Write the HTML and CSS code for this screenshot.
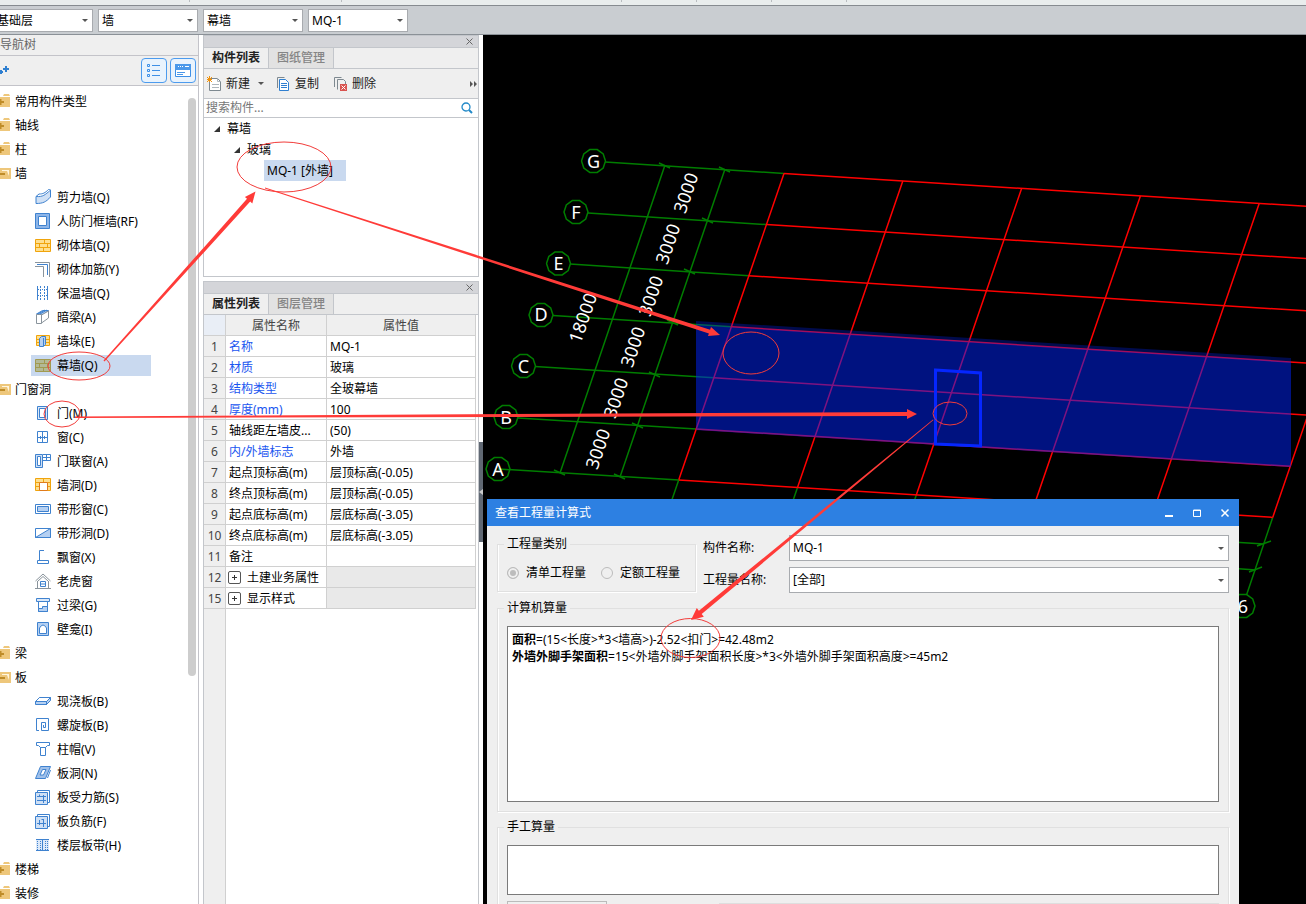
FILE: index.html
```html
<!DOCTYPE html>
<html lang="zh-CN">
<head>
  <meta charset="UTF-8">
  <meta name="viewport" content="width=device-width, initial-scale=1.0">
  <title>查看工程量计算式</title>
  <link rel="stylesheet" href="styles.css">
</head>
<body>

<!-- icon set -->
<svg class="sprite" aria-hidden="true">
  <symbol id="folder" viewBox="0 0 16 16">
    <path d="M0 4h15v10H0zM8 3l1-2h5l1 2z" fill="#eec77b"/>
    <path d="M2 9h7M5.500 6v6" stroke="#bf8c28" stroke-width="2"/>
  </symbol>
  <symbol id="folder-open" viewBox="0 0 16 16">
    <path d="M0 3h16v11H0z" fill="#eec77b"/>
    <path d="M7 5h7v6l-2-5H7z" fill="#fff6e0"/>
    <path d="M3 9h7" stroke="#bf8c28" stroke-width="2"/>
  </symbol>
  <symbol id="shear" viewBox="0 0 16 16">
    <path d="M1 7.500C8 8 10 6 15.500 1v7C11 13 8 14.500 1 14.500z" fill="#cfe0f5" stroke="#3f82cf"/>
    <path d="M1 7.500l3-2.500c4 0 6-1 9.500-4.500l2 .5" fill="#fff" stroke="#3f82cf"/>
  </symbol>
  <symbol id="frame" viewBox="0 0 16 16">
    <path d="M.5.5h14v15H.5z" fill="#8db5e8" stroke="#3f82cf"/>
    <path d="M3.500 3.500h8v9h-8z" fill="#fff" stroke="#3f82cf"/>
  </symbol>
  <symbol id="brick" viewBox="0 0 16 16">
    <path d="M.5 2.500h15v12H.5z" fill="#ffdf8e" stroke="#f0a40c"/>
    <path d="M0 6.500h16M0 10.500h16M9.500 3v3.500M4.500 6.500v4M12.500 6.500v4M8.500 10.500v4" stroke="#f0a40c"/>
  </symbol>
  <symbol id="brick-sel" viewBox="0 0 16 16">
    <path d="M.5 2.500h15v12H.5z" fill="#b3b996" stroke="#a19a50"/>
    <path d="M0 6.500h16M0 10.500h16M9.500 3v3.500M4.500 6.500v4M12.500 6.500v4M8.500 10.500v4" stroke="#a19a50"/>
  </symbol>
  <symbol id="rebar" viewBox="0 0 16 16" fill="none">
    <path d="M0 1.500h14.500V16M0 5.500h8.500V16" stroke="#8a949c"/>
    <path d="M2 3.500h10.500V14" stroke="#3f82cf"/>
  </symbol>
  <symbol id="insul" viewBox="0 0 16 16" stroke="#3f82cf">
    <path d="M2.500 1v14M12.500 1v14"/>
    <path d="M5.500 1v14M9.500 1v14" stroke-dasharray="2 1"/>
    <path d="M3 4.500h10M3 10.500h10" stroke-dasharray="1 1"/>
  </symbol>
  <symbol id="beam" viewBox="0 0 16 16">
    <path d="M1.500 5l6-3.500h6L8 5.500z" fill="#b5d0f2" stroke="#3f82cf"/>
    <path d="M1.500 5.500h5v9h-5zM6.500 14l7-5V2L6.500 6" fill="#fff" stroke="#8a949c"/>
    <path d="M3 5l7-4M5 5l7-4" stroke="#3f82cf"/>
  </symbol>
  <symbol id="pier" viewBox="0 0 16 16">
    <path d="M1.500 2.500h13v10h-13z" fill="#ffdf8e" stroke="#f0a40c"/>
    <path d="M1 6.500h14M1 9.500h14" stroke="#f0a40c"/>
    <path d="M4.500 5.500l2-2h4v8l-2 2h-4z" fill="#b5d0f2" stroke="#3f82cf"/>
    <path d="M8.500 5v8" stroke="#3f82cf"/>
  </symbol>
  <symbol id="door" viewBox="0 0 16 16">
    <path d="M2.500 1.500h10v13h-10z" fill="#dce9f9" stroke="#3f82cf"/>
    <path d="M4.500 3.500h6v9h-6z" fill="#fff" stroke="#3f82cf"/>
  </symbol>
  <symbol id="window" viewBox="0 0 16 16" fill="none" stroke="#3f82cf">
    <path d="M2.500 2.500h10v11h-10zM7.500 2v12M2 8.500h11M5.500 7v3M9.500 7v3"/>
  </symbol>
  <symbol id="doorwin" viewBox="0 0 16 16">
    <path d="M.5 1.500h7v13h-7z" fill="#cfe0f5" stroke="#3f82cf"/>
    <path d="M2.500 3.500h3v9h-3z" fill="#fff" stroke="#3f82cf"/>
    <path d="M8 1.500h7.500v6H8M11.500 1v6M8 4.500h7" fill="none" stroke="#3f82cf"/>
  </symbol>
  <symbol id="hole" viewBox="0 0 16 16">
    <path d="M.5 1.500h15v12H.5z" fill="#ffdf8e" stroke="#f0a40c"/>
    <path d="M0 5.500h16M0 9.500h16M8.500 2v3" stroke="#f0a40c"/>
    <path d="M4.500 5.500h8v8h-8z" fill="#fff" stroke="#e07b1c"/>
  </symbol>
  <symbol id="strip" viewBox="0 0 16 16" stroke="#3f82cf">
    <path d="M.5 3.500h15v9H.5z" fill="#fff"/>
    <path d="M2.500 5.500h11v5h-11z" fill="#b5d0f2"/>
  </symbol>
  <symbol id="striphole" viewBox="0 0 16 16" stroke="#3f82cf">
    <path d="M.5 3.500h15v9H.5z" fill="#fff"/>
    <path d="M.5 12.500l15-9v9z" fill="#b5d0f2"/>
  </symbol>
  <symbol id="bay" viewBox="0 0 16 16" fill="none" stroke="#3f82cf">
    <path d="M9 1.500H4.500v10M2.500 11.500h11v3h-11z"/>
  </symbol>
  <symbol id="house" viewBox="0 0 16 16" fill="none">
    <path d="M.5 8L8 1l7.500 7M2.500 8v7M13.500 8v7M0 15.500h16M3 8l5-4.500L13 8" stroke="#8a949c"/>
    <path d="M5.500 8.500h5v5h-5zM5 11h6" stroke="#3f82cf"/>
  </symbol>
  <symbol id="lintel" viewBox="0 0 16 16" stroke="#3f82cf">
    <path d="M1.500 1.500h13v3h-13z" fill="#dce9f9"/>
    <path d="M3.500 4.500h9v10h-9z" fill="#fff"/>
    <path d="M3.500 11.500h4v-2h5v5h-9z" fill="#b5d0f2"/>
  </symbol>
  <symbol id="niche" viewBox="0 0 16 16" stroke="#3f82cf">
    <path d="M2.500 1.500h11v13h-11z" fill="#b5d0f2"/>
    <path d="M4.500 12.500V7q3.500-6 7 0v5.500z" fill="#fff"/>
  </symbol>
  <symbol id="slab" viewBox="0 0 16 16" stroke="#3f82cf">
    <path d="M.5 8.500l4-4h11v3l-4 4H.5z" fill="#b5d0f2"/>
    <path d="M.5 8.500l4-4h11l-4 4z" fill="#fff"/>
    <path d="M11.500 8v4"/>
  </symbol>
  <symbol id="spiral" viewBox="0 0 16 16" fill="none" stroke="#3f82cf">
    <path d="M4 13.500H1.500v-12h12v12h-7v-8h4v5h-2V8"/>
  </symbol>
  <symbol id="cap" viewBox="0 0 16 16" fill="#fff" stroke="#3f82cf">
    <path d="M1.500 1.500h13v3h-2l-2 2h-5l-2-2h-2zM5.500 6.500h5v8h-5z"/>
  </symbol>
  <symbol id="slabhole" viewBox="0 0 16 16" stroke="#3f82cf">
    <path d="M.5 13.500l5-12h10l-5 12z" fill="#9fc0ea"/>
    <path d="M5 10l2.500-5.500H11L8.500 10z" fill="#fff"/>
    <path d="M12.500 13l3-8" fill="none"/>
  </symbol>
  <symbol id="slabbar" viewBox="0 0 16 16" stroke="#3f82cf">
    <path d="M2.500 1.500h12v12h-12z" fill="#fff"/>
    <path d="M.5 3.500h12v12H.5z" fill="#cfe0f5"/>
    <path d="M2 7.500h9M2 11.500h9M4.500 5.500v2M8.500 6v8" fill="none"/>
  </symbol>
  <symbol id="slabneg" viewBox="0 0 16 16" stroke="#3f82cf">
    <path d="M2.500 1.500h12v12h-12z" fill="#fff"/>
    <path d="M.5 3.500h12v12H.5z" fill="#cfe0f5"/>
    <path d="M2 10.500h9M4.500 7v5M8.500 6v8M8.500 6.500h-2" fill="none"/>
  </symbol>
  <symbol id="band" viewBox="0 0 16 16" stroke="#3f82cf">
    <path d="M1 3h13v10H1z" fill="#dce9f9" stroke="none"/>
    <path d="M1 2.500h13M1 13.500h13M7.500 2v12"/>
    <path d="M2.500 4v9M5.500 4v9M10.500 4v9M12.500 4v9" stroke-dasharray="1 1"/>
  </symbol>
  <symbol id="bubble" viewBox="-13 -13 26 26">
    <path d="M12 0L9.700 7 3.700 11.400-3.700 11.400-9.700 7-12 0-9.700-7-3.700-11.400 3.700-11.400 9.700-7z" fill="#000" stroke="#007d00" stroke-width="1.500"/>
  </symbol>
</svg>

<ul class="ribbon"><li></li><li></li><li></li><li></li><li></li><li></li></ul>

<div class="toolbar">
  <span class="combo"><select aria-label="楼层"><option>基础层</option></select></span>
  <span class="combo"><select aria-label="构件大类"><option>墙</option></select></span>
  <span class="combo"><select aria-label="构件类型"><option>幕墙</option></select></span>
  <span class="combo"><select aria-label="构件"><option>MQ-1</option></select></span>
</div>

<main class="workspace">

  <nav class="nav">
    <h2 class="nav-title">导航树</h2>
    <div class="nav-tools">
      <svg class="nav-add" width="10" height="16" viewBox="0 0 10 16"><path d="M0 9h3M1 7v4M3 6h6M6 3v6" stroke="#2f7fd0" stroke-width="2"/></svg>
      <button class="view-btn" aria-label="列表视图">
        <svg width="16" height="16" viewBox="0 0 16 16" fill="none" stroke="#3d8fe6"><path d="M1.500 1.500h2v2h-2zM1.500 6.500h2v2h-2zM1.500 11.500h2v2h-2zM6 2.500h8M6 7.500h8M6 12.500h8"/></svg>
      </button>
      <button class="view-btn" aria-label="卡片视图">
        <svg width="16" height="16" viewBox="0 0 16 16"><path d="M.5 1.500h15v12H.5z" fill="#fff" stroke="#3d8fe6"/><path d="M0 1h16v6H0z" fill="#4a98ea"/><path d="M3 3.500h1M5 3.500h1M7 3.500h1M10 3.500h4" stroke="#fff"/><path d="M2 9.500h8M2 11.500h6" stroke="#4a98ea"/></svg>
      </button>
    </div>
    <div class="nav-body">
      <ul class="tree">
        <li><a href="#" class="group"><svg><use href="#folder"/></svg>常用构件类型</a></li>
        <li><a href="#" class="group"><svg><use href="#folder"/></svg>轴线</a></li>
        <li><a href="#" class="group"><svg><use href="#folder"/></svg>柱</a></li>
        <li><a href="#" class="group"><svg><use href="#folder-open"/></svg>墙</a>
          <ul>
            <li><a href="#"><svg><use href="#shear"/></svg>剪力墙(Q)</a></li>
            <li><a href="#"><svg><use href="#frame"/></svg>人防门框墙(RF)</a></li>
            <li><a href="#"><svg><use href="#brick"/></svg>砌体墙(Q)</a></li>
            <li><a href="#"><svg><use href="#rebar"/></svg>砌体加筋(Y)</a></li>
            <li><a href="#"><svg><use href="#insul"/></svg>保温墙(Q)</a></li>
            <li><a href="#"><svg><use href="#beam"/></svg>暗梁(A)</a></li>
            <li><a href="#"><svg><use href="#pier"/></svg>墙垛(E)</a></li>
            <li><a href="#" class="selected"><svg><use href="#brick-sel"/></svg>幕墙(Q)</a></li>
          </ul>
        </li>
        <li><a href="#" class="group"><svg><use href="#folder-open"/></svg>门窗洞</a>
          <ul>
            <li><a href="#"><svg><use href="#door"/></svg>门(M)</a></li>
            <li><a href="#"><svg><use href="#window"/></svg>窗(C)</a></li>
            <li><a href="#"><svg><use href="#doorwin"/></svg>门联窗(A)</a></li>
            <li><a href="#"><svg><use href="#hole"/></svg>墙洞(D)</a></li>
            <li><a href="#"><svg><use href="#strip"/></svg>带形窗(C)</a></li>
            <li><a href="#"><svg><use href="#striphole"/></svg>带形洞(D)</a></li>
            <li><a href="#"><svg><use href="#bay"/></svg>飘窗(X)</a></li>
            <li><a href="#"><svg><use href="#house"/></svg>老虎窗</a></li>
            <li><a href="#"><svg><use href="#lintel"/></svg>过梁(G)</a></li>
            <li><a href="#"><svg><use href="#niche"/></svg>壁龛(I)</a></li>
          </ul>
        </li>
        <li><a href="#" class="group"><svg><use href="#folder"/></svg>梁</a></li>
        <li><a href="#" class="group"><svg><use href="#folder-open"/></svg>板</a>
          <ul>
            <li><a href="#"><svg><use href="#slab"/></svg>现浇板(B)</a></li>
            <li><a href="#"><svg><use href="#spiral"/></svg>螺旋板(B)</a></li>
            <li><a href="#"><svg><use href="#cap"/></svg>柱帽(V)</a></li>
            <li><a href="#"><svg><use href="#slabhole"/></svg>板洞(N)</a></li>
            <li><a href="#"><svg><use href="#slabbar"/></svg>板受力筋(S)</a></li>
            <li><a href="#"><svg><use href="#slabneg"/></svg>板负筋(F)</a></li>
            <li><a href="#"><svg><use href="#band"/></svg>楼层板带(H)</a></li>
          </ul>
        </li>
        <li><a href="#" class="group"><svg><use href="#folder"/></svg>楼梯</a></li>
        <li><a href="#" class="group"><svg><use href="#folder"/></svg>装修</a></li>
      </ul>
      <div class="scrollbar"></div>
    </div>
  </nav>

  <div class="panels">
    <section class="panel list-panel">
      <div class="panel-bar"><button class="close" aria-label="关闭"><svg width="7" height="7" viewBox="0 0 7 7"><path d="M.5.5l6 6M6.500.5l-6 6" stroke="#666"/></svg></button></div>
      <div class="tabs">
        <button class="tab active">构件列表</button>
        <button class="tab">图纸管理</button>
      </div>
      <div class="actions">
        <button class="new"><svg width="16" height="16" viewBox="0 0 16 16"><path d="M2.500 2.500h8l3 3v9h-11z" fill="#fff" stroke="#7e8990"/><path d="M10.500 2.500v3h3M5 8.500h7M5 11.500h7" fill="none" stroke="#aeb6bc"/><path d="M0 1l5 5M5 1L0 6M2.500 0v6M0 3.500h5" stroke="#f0920c"/></svg>新建<i class="caret"></i></button>
        <button class="copy"><svg width="16" height="16" viewBox="0 0 16 16"><path d="M1.500 12V1.500h7" fill="none" stroke="#7e8990"/><path d="M3.500 3.500h6l3 3v8h-9z" fill="#fff" stroke="#2f7fd0"/><path d="M5 7.500h6M5 9.500h6M5 11.500h6" stroke="#2f7fd0"/></svg>复制</button>
        <button><svg width="16" height="16" viewBox="0 0 16 16"><path d="M1.500 11V1.500h7M4.500 13.500v-10h6l2 2v3" fill="none" stroke="#7e8990"/><path d="M7 8h7v7H7z" fill="#d9534f"/><path d="M8.500 9.500l4 4M12.500 9.500l-4 4" stroke="#fff"/></svg>删除</button>
        <svg class="more" width="8" height="6" viewBox="0 0 8 6"><path d="M0 0l3 3-3 3zM4 0l3 3-3 3z" fill="#555"/></svg>
      </div>
      <div class="search">
        <input type="text" placeholder="搜索构件..." aria-label="搜索构件">
        <svg width="12" height="12" viewBox="0 0 12 12" fill="none" stroke="#2289c8"><circle cx="5" cy="5" r="4" stroke-width="1.300"/><path d="M8 8l3 3" stroke-width="2"/></svg>
      </div>
      <ul class="parts">
        <li><svg width="7" height="7"><path d="M6 0v6H0z" fill="#333"/></svg>幕墙
          <ul>
            <li><svg width="7" height="7"><path d="M6 0v6H0z" fill="#333"/></svg>玻璃
              <ul><li><a href="#">MQ-1 [外墙]</a></li></ul>
            </li>
          </ul>
        </li>
      </ul>
    </section>

    <section class="panel prop-panel">
      <div class="panel-bar"><button class="close" aria-label="关闭"><svg width="7" height="7" viewBox="0 0 7 7"><path d="M.5.5l6 6M6.500.5l-6 6" stroke="#666"/></svg></button></div>
      <div class="tabs">
        <button class="tab active">属性列表</button>
        <button class="tab">图层管理</button>
      </div>
      <div class="prop-body">
        <table class="props">
          <colgroup><col class="c-num"><col class="c-name"><col></colgroup>
          <thead><tr><th></th><th>属性名称</th><th>属性值</th></tr></thead>
          <tbody>
            <tr><th>1</th><td class="key">名称</td><td>MQ-1</td></tr>
            <tr><th>2</th><td class="key">材质</td><td>玻璃</td></tr>
            <tr><th>3</th><td class="key">结构类型</td><td>全玻幕墙</td></tr>
            <tr><th>4</th><td class="key">厚度(mm)</td><td>100</td></tr>
            <tr><th>5</th><td>轴线距左墙皮...</td><td>(50)</td></tr>
            <tr><th>6</th><td class="key">内/外墙标志</td><td>外墙</td></tr>
            <tr><th>7</th><td>起点顶标高(m)</td><td>层顶标高(-0.05)</td></tr>
            <tr><th>8</th><td>终点顶标高(m)</td><td>层顶标高(-0.05)</td></tr>
            <tr><th>9</th><td>起点底标高(m)</td><td>层底标高(-3.05)</td></tr>
            <tr><th>10</th><td>终点底标高(m)</td><td>层底标高(-3.05)</td></tr>
            <tr><th>11</th><td>备注</td><td></td></tr>
            <tr><th>12</th><td><button class="expand" aria-label="展开"></button>土建业务属性</td><td class="off"></td></tr>
            <tr><th>15</th><td><button class="expand" aria-label="展开"></button>显示样式</td><td class="off"></td></tr>
          </tbody>
        </table>
      </div>
    </section>
  </div>

  <div class="splitter"><button aria-label="折叠面板"><svg width="4" height="6"><path d="M4 0v6L0 3z" fill="#ccc"/></svg></button></div>

  <section class="view">
    <svg class="cad" role="img" aria-label="轴网">
      <g transform="translate(-483 -35)">
        <!-- axis leads and dimension lines -->
        <g stroke="#007d00" stroke-width="1.500" fill="none">
          <path d="M605 162L784 173.500M588 213L766.500 224.600M570 264L748.900 275.700M553 315.500L731.400 326.800M535 366.500L713.800 377.800M518 418L696.200 428.900"/>
          <path d="M665 165L560 473M725 169L620 477"/>
          <path d="M678.700 480l-26 76M797.500 487.500l-26 76M916.300 495l-26 76M1272.700 517.400l-26 77"/>
          <path d="M1200 540l64 4M1200 566l56 4M1257 546l14-5M1249 572l13-5"/>
          <path d="M659 163l11 5M719 167l11 5M702 218l11 5M684 269l11 5M667 320l11 5M649 372l11 5M632 423l11 5M554 470l11 5M614 474l11 5"/>
        </g>
        <!-- axis grid -->
        <g stroke="#f00" stroke-width="1.500">
          <path d="M784 173.500L1378 210.900M766.500 224.600L1360.500 262M748.900 275.700L1342.900 313.100M731.400 326.800L1325.400 364.200M713.800 377.800L1307.800 415.200M696.200 428.900L1290.200 466.300M678.700 480L1272.700 517.400"/>
          <path d="M784 173.500L678.700 480M902.800 181L797.500 487.500M1021.600 188.500L916.300 495M1140.400 195.900L1035.100 502.400M1259.200 203.400L1153.900 509.900M1378 210.900L1272.700 517.400"/>
        </g>
        <!-- curtain wall and door -->
        <path d="M696 321L1291 358V467L696 430z" fill="#0026ff" opacity=".3"/>
        <path d="M696 325L1291 362V467L696 430z" fill="#0026ff" opacity=".29"/>
        <path d="M935.500 370L980.500 373V446L935.500 444z" fill="none" stroke="#0526ff" stroke-width="3"/>
        <g class="bubbles">
          <use href="#bubble" x="580.500" y="148" width="26" height="26"/><text x="593.500" y="168">G</text>
          <use href="#bubble" x="563" y="199" width="26" height="26"/><text x="576" y="219">F</text>
          <use href="#bubble" x="545.500" y="250.500" width="26" height="26"/><text x="558.500" y="270">E</text>
          <use href="#bubble" x="528" y="302" width="26" height="26"/><text x="541" y="321">D</text>
          <use href="#bubble" x="510.500" y="353" width="26" height="26"/><text x="523.500" y="373">C</text>
          <use href="#bubble" x="493" y="404" width="26" height="26"/><text x="506" y="424">B</text>
          <use href="#bubble" x="485" y="456" width="26" height="26"/><path d="M498 469l180.700 11" stroke="#007d00" stroke-width="1.500"/><text x="498" y="476">A</text>
          <use href="#bubble" x="1230" y="593" width="26" height="26"/><text x="1243" y="613">6</text>
        </g>
        <g class="dims">
          <text transform="translate(692 195) rotate(-71)">3000</text>
          <text transform="translate(674 246) rotate(-71)">3000</text>
          <text transform="translate(657 298) rotate(-71)">3000</text>
          <text transform="translate(639 349) rotate(-71)">3000</text>
          <text transform="translate(622 400) rotate(-71)">3000</text>
          <text transform="translate(604 451) rotate(-71)">3000</text>
          <text transform="translate(589 320) rotate(-71)">18000</text>
        </g>
      </g>
    </svg>

    <div class="dialog" role="dialog" aria-labelledby="dlg-title">
      <header class="dialog-head">
        <h1 id="dlg-title">查看工程量计算式</h1>
        <button aria-label="最小化"><svg width="10" height="10"><path d="M1 8h8" stroke="#fff" stroke-width="2"/></svg></button>
        <button aria-label="最大化"><svg width="10" height="10"><path d="M1.500 2h7v6.500h-7zM1 2.500h8" fill="none" stroke="#fff"/></svg></button>
        <button aria-label="关闭"><svg width="10" height="10"><path d="M1.500 1.500l7 7M8.500 1.500l-7 7" stroke="#fff" stroke-width="1.500"/></svg></button>
      </header>
      <form class="dialog-body">
        <div class="filters">
          <fieldset class="kind">
            <legend>工程量类别</legend>
            <label><input type="radio" name="kind" checked disabled>清单工程量</label>
            <label><input type="radio" name="kind" disabled>定额工程量</label>
          </fieldset>
          <div class="fields">
            <label for="part">构件名称:</label>
            <span class="combo"><select id="part"><option>MQ-1</option></select></span>
            <label for="qty">工程量名称:</label>
            <span class="combo"><select id="qty"><option>[全部]</option></select></span>
          </div>
        </div>
        <fieldset class="calc">
          <legend>计算机算量</legend>
          <div class="result" role="textbox" aria-readonly="true" aria-label="计算机算量" tabindex="0">
            <p><b>面积</b>=(15&lt;长度&gt;*3&lt;墙高&gt;)-2.52&lt;扣门&gt;=42.48m2</p>
            <p><b>外墙外脚手架面积</b>=15&lt;外墙外脚手架面积长度&gt;*3&lt;外墙外脚手架面积高度&gt;=45m2</p>
          </div>
        </fieldset>
        <fieldset class="calc">
          <legend>手工算量</legend>
          <textarea class="manual" aria-label="手工算量"></textarea>
          <div class="manual-foot"><button type="button" aria-label="手工算量结果"></button><span></span></div>
        </fieldset>
      </form>
    </div>
  </section>
</main>

<!-- red callouts over the whole workspace -->
<svg class="marks" aria-hidden="true">
  <g fill="none" stroke="#f23c3a">
    <ellipse cx="284" cy="167" rx="47" ry="25"/>
    <ellipse cx="79" cy="366" rx="31" ry="14"/>
    <ellipse cx="62" cy="414" rx="18" ry="13"/>
    <ellipse cx="751" cy="353" rx="28" ry="21"/>
    <ellipse cx="950" cy="413.500" rx="17" ry="11.500"/>
    <ellipse cx="690.500" cy="638" rx="29.500" ry="19.500"/>
  </g>
  <g fill="#ff3b38">
    <path d="M103.500 360.500L247 198.800 244.900 196.900 255.500 191.500 252.300 203.500 250.200 201.600 104.500 361.500z"/>
    <path d="M265 187.500L710.100 329.700 711 327 720 335 708 336 708.900 333.500 265 188.500z"/>
    <path d="M75 416.500L907 411.900V409L917 414 907 419V415.900L75 418z"/>
    <path d="M933 419.500L698.900 610.700 696.800 608.100 691 620 703.800 616.700 701.700 614.100 933.500 420z"/>
  </g>
</svg>

</body>
</html>
```
FILE: styles.css
```css
* { box-sizing: border-box; }

body {
  margin: 0;
  height: 100vh;
  display: flex;
  flex-direction: column;
  overflow: hidden;
  background: #fff;
  color: #000;
  font: 12px/18px "Noto Sans", "Noto Sans CJK SC", sans-serif;
}

ul {
  list-style: none;
  margin: 0;
  padding: 0;
}

a {
  color: inherit;
  text-decoration: none;
}

button,
input,
select,
textarea {
  margin: 0;
  padding: 0;
  border: none;
  border-radius: 0;
  background: none;
  color: inherit;
  font: inherit;
}

svg { flex: none; }

.sprite {
  position: absolute;
  width: 0;
  height: 0;
}

/* top bars */
.ribbon {
  display: flex;
  flex: none;
  height: 6px;
  background: #e9eded;
  border-bottom: 1px solid #868b90;
}

.ribbon li {
  width: 152px;
  height: 2px;
  border-right: 1px solid #b9bdc0;
}

.ribbon li:first-child { width: 190px; }
.ribbon li:nth-child(3) { width: 280px; }
.ribbon li:nth-child(n+4) { width: 75px; }

.toolbar {
  display: flex;
  flex: none;
  gap: 5px;
  height: 29px;
  margin-left: -7px;
  padding-top: 3px;
  background: #c9cdd1;
  border-bottom: 1px solid #8b9197;
}

.combo {
  display: grid;
  align-items: center;
  background: #fff;
  border: 1px solid #a8abaf;
}

.combo select {
  grid-area: 1 / 1;
  width: 100%;
  height: 100%;
  padding-left: 3px;
  appearance: none;
}

.combo::after {
  content: "";
  grid-area: 1 / 1;
  justify-self: end;
  margin-right: 4px;
  border: 3px solid transparent;
  border-top-color: #555;
  border-bottom: none;
  pointer-events: none;
}

.toolbar .combo {
  width: 100px;
  height: 23px;
}

.workspace {
  display: flex;
  flex: 1;
  min-height: 0;
}

/* navigation tree */
.nav {
  display: flex;
  flex: none;
  flex-direction: column;
  width: 199px;
  border-right: 1px solid #c3c3c9;
}

.nav-title {
  margin: 0;
  height: 21px;
  line-height: 20px;
  font-size: 12px;
  font-weight: normal;
  color: #666;
  background: #efefef;
  border-bottom: 1px solid #c3c3c9;
}

.nav-tools {
  display: flex;
  align-items: center;
  gap: 3px;
  height: 30px;
  padding-right: 2px;
  background: #efefef;
  border-bottom: 1px solid #c3c3c9;
}

.nav-add { margin-right: auto; }

.view-btn {
  display: flex;
  align-items: center;
  justify-content: center;
  width: 26px;
  height: 25px;
  padding-top: 1px;
  background: #e9f3fd;
  border: 1px solid #4c9bee;
  border-radius: 4px;
}

.nav-body {
  display: flex;
  flex: 1;
  min-height: 0;
  padding-top: 2px;
}

.tree {
  flex: 1;
  overflow: hidden;
}

.tree a {
  display: flex;
  align-items: center;
  gap: 6px;
  width: 120px;
  height: 21px;
  margin: 3px 0 3px 31px;
  padding-left: 4px;
  white-space: nowrap;
}

.tree svg {
  width: 16px;
  height: 16px;
  margin-bottom: 1px;
}

.tree .group {
  gap: 4px;
  margin-left: -5px;
  padding-left: 0;
}

.tree .selected { background: #c9d9ef; }

.scrollbar {
  width: 8px;
  height: 578px;
  margin: 10px 2px 0 0;
  border-radius: 4px;
  background: #cdcdcd;
}

/* docked panels */
.panels {
  display: flex;
  flex: none;
  flex-direction: column;
  gap: 4px;
  width: 276px;
  margin-left: 4px;
}

.panel {
  display: flex;
  flex-direction: column;
  border: 1px solid #c3c6cb;
}

.list-panel { height: 242px; }

.prop-panel {
  flex: 1;
  border-bottom: none;
}

.panel-bar {
  display: flex;
  flex: none;
  align-items: center;
  justify-content: flex-end;
  height: 11px;
  padding-right: 5px;
  background: #d4d5d9;
}

.close {
  display: flex;
}

.tabs {
  display: flex;
  flex: none;
  height: 22px;
  background: #efefef;
  border-top: 1px solid #c3c6cb;
  border-bottom: 1px solid #c3c6cb;
}

.tab {
  width: 65px;
  border-right: 1px solid #c3c6cb;
  background: #e2e2e2;
  color: #858585;
  font-weight: 500;
}

.tab.active {
  background: #efefef;
  color: #222;
  font-weight: bold;
}

.actions {
  display: flex;
  flex: none;
  align-items: center;
  height: 30px;
  padding-left: 3px;
  background: #efefef;
  border-bottom: 1px solid #c3c6cb;
  color: #222;
}

.actions button {
  display: flex;
  align-items: center;
  gap: 3px;
}

.actions .new { margin-right: 12px; }

.actions .copy { margin-right: 14px; }

.caret {
  margin-left: 5px;
  border: 3px solid transparent;
  border-top-color: #555;
  border-bottom: none;
}

.actions .more { margin-left: auto; }

.search {
  display: flex;
  flex: none;
  align-items: center;
  height: 19px;
  padding: 0 5px 0 2px;
  border-bottom: 1px solid #c3c6cb;
}

.search input {
  flex: 1;
  min-width: 0;
  height: 18px;
}

.search input::placeholder { color: #777; }

.parts {
  line-height: 21px;
  padding-left: 10px;
}

.parts svg { margin-right: 6px; }

.parts ul { padding-left: 20px; }

.parts ul ul { padding-left: 30px; }

.parts a {
  display: block;
  width: 82px;
  height: 21px;
  padding-left: 3px;
  background: #c9d9ef;
  white-space: nowrap;
}

.prop-body {
  flex: 1;
  background: linear-gradient(to right, #efefef 21px, #d0d0d0 21px, #d0d0d0 22px, #fff 22px);
}

.props {
  width: 272px;
  table-layout: fixed;
  border-collapse: separate;
  border-spacing: 0;
}

.c-num { width: 22px; }
.c-name { width: 101px; }

.props th,
.props td {
  height: 21px;
  padding: 2px 0 0 3px;
  line-height: 18px;
  font-weight: normal;
  text-align: left;
  white-space: nowrap;
  background: #fff;
  border-right: 1px solid #d0d0d0;
  border-bottom: 1px solid #d0d0d0;
}

.props th {
  padding-left: 0;
  text-align: center;
  color: #444;
  background: #efefef;
}

.props thead th:first-child { background: #e9eef6; }

.props .key { color: #1a56f0; }

.props .off { background: #e9e9e9; }

.expand {
  width: 13px;
  height: 13px;
  margin: 0 6px 0 -1px;
  vertical-align: -1px;
  border: 1px solid #555;
  border-radius: 2px;
  background:
    linear-gradient(#333, #333) center / 5px 1px no-repeat,
    linear-gradient(#333, #333) center / 1px 5px no-repeat;
}

.splitter {
  flex: none;
  width: 4px;
  padding-top: 407px;
}

.splitter button {
  display: flex;
  align-items: center;
  width: 4px;
  height: 100px;
  background: #606873;
}

/* drawing area */
.view {
  position: relative;
  flex: 1;
  min-width: 0;
  overflow: hidden;
  background: #000;
}

.cad {
  display: block;
  width: 100%;
  height: 100%;
}

.cad text {
  fill: #fff;
  font-size: 18px;
  text-anchor: middle;
}

/* formula window */
.dialog {
  position: absolute;
  top: 464px;
  right: 67px;
  bottom: 0;
  left: 4px;
  display: flex;
  flex-direction: column;
  overflow: hidden;
  background: #efefef;
}

.dialog-head {
  display: flex;
  flex: none;
  align-items: center;
  gap: 18px;
  height: 27px;
  padding: 0 9px 0 8px;
  background: #2d80e2;
  color: #fff;
}

.dialog-head h1 {
  margin: 0 auto 0 0;
  font-size: 12px;
  font-weight: normal;
}

.dialog-head button { display: flex; }

.dialog-body { padding: 9px 10px 0; }

.dialog-body fieldset {
  min-width: 0;
  margin: 0;
  border: 1px solid #e0e0e0;
  box-shadow: inset 1px 0 #fff, 1px 1px #fff;
}

.dialog-body legend {
  padding: 0 3px;
  line-height: 18px;
}

.filters {
  display: flex;
  gap: 7px;
}

.filters .kind {
  display: flex;
  flex: none;
  gap: 12px;
  width: 199px;
  height: 57px;
  padding: 11px 6px 0;
}

.kind label {
  display: flex;
  align-items: center;
  gap: 7px;
  height: 18px;
  margin-left: 3px;
}

.kind input {
  appearance: none;
  width: 12px;
  height: 12px;
  border: 1px solid #bcbcbc;
  border-radius: 50%;
}

.kind input:checked {
  background: #bcbcbc;
  box-shadow: inset 0 0 0 2px #efefef;
}

.fields {
  display: grid;
  flex: 1;
  grid-template-columns: 86px 1fr;
  grid-auto-rows: 26px;
  gap: 6px 0;
  align-items: center;
}

.fields .combo { height: 26px; }

.dialog-body .calc {
  margin-top: 6px;
  padding: 9px;
}

.calc legend { margin-left: -3px; }

.result {
  height: 176px;
  padding: 4px;
  background: #fff;
  border: 1px solid #7a7a7a;
}

.result p {
  margin: 0;
  line-height: 17px;
}

.manual {
  display: block;
  width: 100%;
  height: 50px;
  background: #fff;
  border: 1px solid #7a7a7a;
  resize: none;
}

.manual-foot {
  display: flex;
  justify-content: space-between;
  padding-top: 6px;
}

.manual-foot button {
  width: 100px;
  height: 24px;
  border: 1px solid #bbb;
}

.manual-foot span {
  width: 500px;
  height: 20px;
  margin-top: 2px;
  background: #dedede;
}

/* callouts */
.marks {
  position: absolute;
  top: 0;
  left: 0;
  width: 100%;
  height: 100%;
  pointer-events: none;
}
```
